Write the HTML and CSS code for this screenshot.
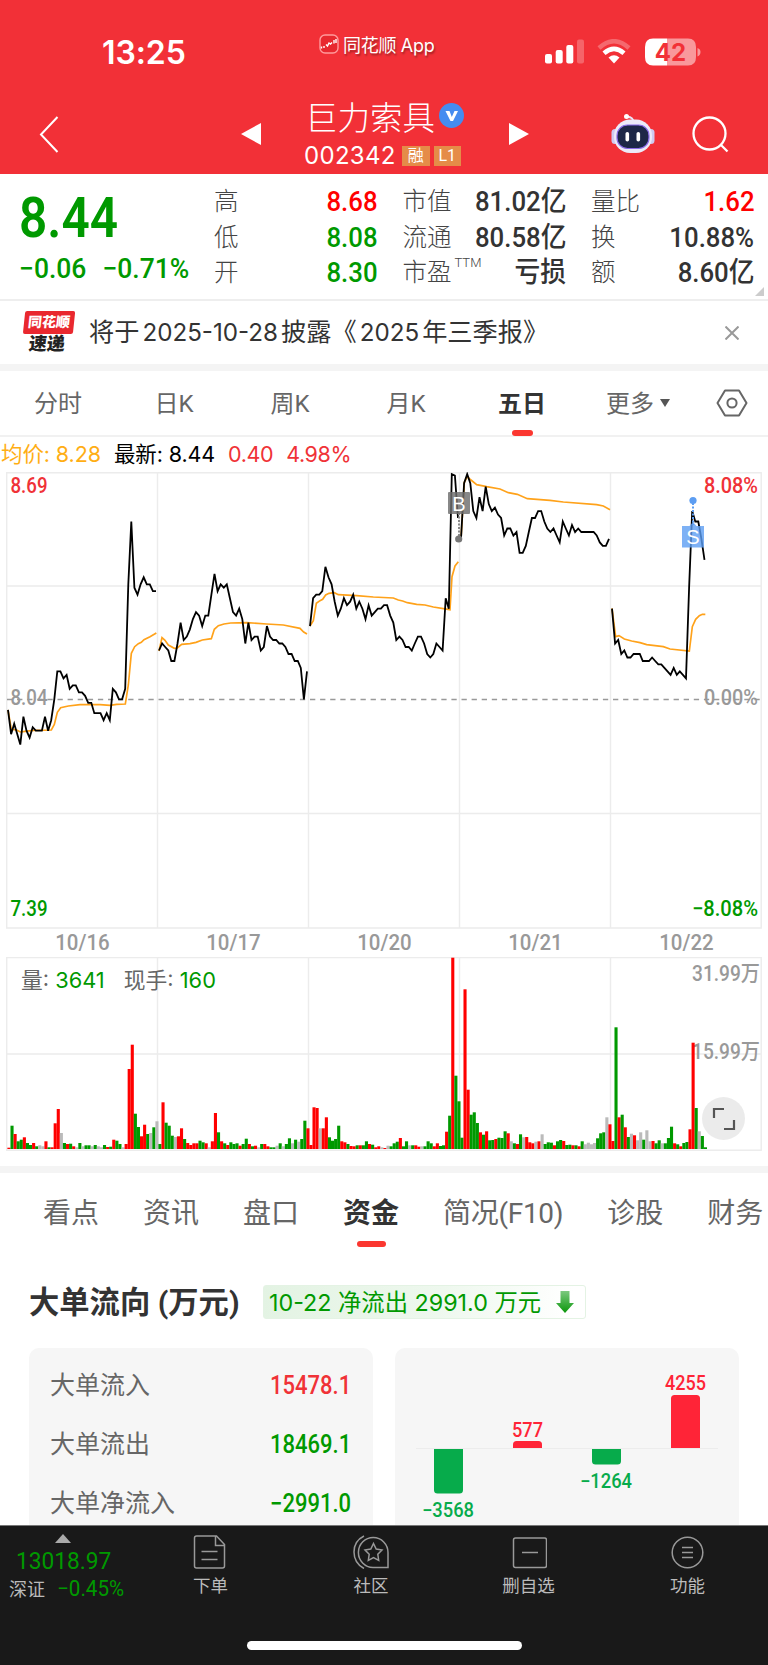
FILE: index.html
```html
<!DOCTYPE html>
<html lang="zh-CN">
  <head>
    <meta charset="UTF-8" />
    <meta name="viewport" content="width=device-width, initial-scale=1.0" />
    <title>巨力索具 002342</title>
    <link rel="stylesheet" href="styles.css">
  </head>
  <body>
    <header>
      <div class="status">
        <div class="time">13:25</div>
        <div class="app-name">
          <svg width="20" height="20" viewBox="0 0 20 20" fill="none">
            <rect x="1" y="1" width="18" height="18" rx="5" fill="#e8282f" stroke="#ff9a9c" stroke-width="1.4" />
            <path d="M2.500 12.500V14.500M5 12v2M7 10.500l1.500 1.500 1.500-3 1.500 1 1.500-1.500M15 6v3.500M17 5v4" stroke="#fff" stroke-width="1.4" />
          </svg>
          <span>同花顺 App</span>
        </div>
        <div class="status-icons">
          <svg width="39" height="25" viewBox="0 0 39 25" fill="#fff">
            <rect x="0" y="15" width="7" height="9.5" rx="2" />
            <rect x="10.7" y="11" width="7" height="13.5" rx="2" />
            <rect x="21.3" y="6" width="7" height="18.5" rx="2" />
            <rect x="32" y="0.5" width="7" height="24" rx="2" opacity="0.25" />
          </svg>
          <svg class="wifi" width="34" height="25" viewBox="0 0 34 25">
            <path d="M2 9Q17-4.500 32 9" fill="none" stroke="#fff" stroke-opacity="0.28" stroke-width="4.500" />
            <path d="M7 14.200Q17 5.500 27 14.200" fill="none" stroke="#fff" stroke-width="4.600" />
            <path d="M17 24.500L11.500 18.500Q17 14 22.500 18.500Z" fill="#fff" />
          </svg>
          <svg class="battery" width="56" height="28" viewBox="0 0 56 28">
            <path d="M8 0.500H22V27.500H8Q0 27.500 0 19V9Q0 0.500 8 0.500Z" fill="#fff" />
            <path d="M22 0.500H43Q51 0.500 51 9V19Q51 27.500 43 27.500H22Z" fill="#fff" opacity="0.5" />
            <path d="M52.500 10Q55.500 11 55.500 14T52.500 18.500Z" fill="#fff" opacity="0.5" />
            <text x="25.500" y="22.500" text-anchor="middle" class="battery-text">42</text>
          </svg>
        </div>
      </div>

      <div class="nav">
        <svg class="back" width="20" height="37" viewBox="0 0 20 37">
          <path d="M18.500 1L2 18.500L18.500 36" fill="none" stroke="#fff" stroke-width="2" />
        </svg>
        <svg class="prev" width="20" height="22" viewBox="0 0 20 22"><path d="M20 0V22L0 11Z" fill="#fff" /></svg>
        <div class="stock">
          <div class="stock-name">
            <span>巨力索具</span>
            <svg width="25" height="25" viewBox="0 0 25 25">
              <circle cx="12.500" cy="12.500" r="12.500" fill="#458cf0" />
              <path d="M6.500 8H10.500L12.800 14L15.500 8H19L14 18H11.500Z" fill="#fff" />
            </svg>
          </div>
          <div class="stock-code">
            <span class="code">002342</span>
            <span class="tag">融</span>
            <span class="tag">L1</span>
          </div>
        </div>
        <svg class="next" width="20" height="22" viewBox="0 0 20 22"><path d="M0 0V22L20 11Z" fill="#fff" /></svg>
        <svg class="robot" width="44" height="40" viewBox="0 0 44 40">
          <path d="M22 8Q23 3.500 16 2.500" fill="none" stroke="#e9e5f7" stroke-width="2" />
          <circle cx="15.500" cy="2.500" r="2.500" fill="#fff" />
          <rect x="0.500" y="15" width="7" height="15" rx="3.500" fill="#cfcaf0" />
          <rect x="36.500" y="15" width="7" height="15" rx="3.500" fill="#cfcaf0" />
          <rect x="3" y="5.500" width="38" height="33.500" rx="16" fill="#eceaf8" />
          <rect x="6" y="11" width="32" height="23.500" rx="10.500" fill="#1d2747" stroke="#8a6be8" stroke-width="1.200" />
          <rect x="14.500" y="18" width="3.600" height="9.500" rx="1.800" fill="#fff" />
          <rect x="25.500" y="18" width="3.600" height="9.500" rx="1.800" fill="#fff" />
        </svg>
        <svg class="search" width="37" height="37" viewBox="0 0 37 37" fill="none" stroke="#fff" stroke-width="2.300">
          <circle cx="17.500" cy="17.500" r="16" />
          <path d="M28.500 28.500L35.500 35.500" />
        </svg>
      </div>
    </header>

    <section class="quote">
      <div class="price down">
        <div class="price-now">8.44</div>
        <div class="price-change"><span>−0.06</span><span>−0.71%</span></div>
      </div>
      <dl class="stats">
        <div><dt>高</dt><dd class="up">8.68</dd></div>
        <div><dt>低</dt><dd class="down">8.08</dd></div>
        <div><dt>开</dt><dd class="down">8.30</dd></div>
      </dl>
      <dl class="stats">
        <div><dt>市值</dt><dd>81.02亿</dd></div>
        <div><dt>流通</dt><dd>80.58亿</dd></div>
        <div><dt>市盈<sup>TTM</sup></dt><dd>亏损</dd></div>
      </dl>
      <dl class="stats">
        <div><dt>量比</dt><dd class="up">1.62</dd></div>
        <div><dt>换</dt><dd>10.88%</dd></div>
        <div><dt>额</dt><dd>8.60亿</dd></div>
      </dl>
      <i class="corner"></i>
    </section>

    <section class="notice">
      <div class="notice-logo">
        <b>同花顺</b>
        <em>速递</em>
      </div>
      <p>将于<span>2025-10-28</span>披露《<span>2025</span>年三季报》</p>
      <svg width="14" height="14" viewBox="0 0 14 14" stroke="#999" stroke-width="2"><path d="M0.500 0.500L13.500 13.500M13.500 0.500L0.500 13.500" /></svg>
    </section>

    <nav class="periods">
      <a>分时</a>
      <a>日K</a>
      <a>周K</a>
      <a>月K</a>
      <a class="active">五日</a>
      <a class="more">更多<i></i></a>
      <svg width="32" height="28" viewBox="0 0 32 28" fill="none" stroke="#666" stroke-width="2">
        <path d="M9 1.500H23L30.500 14L23 26.500H9L1.500 14Z" stroke-linejoin="round" />
        <circle cx="16" cy="14" r="4.600" />
      </svg>
    </nav>

    <section class="charts">
      <div class="legend">
        <span class="avg">均价: 8.28</span>
        <span class="last">最新: 8.44</span>
        <span class="rise">0.40</span>
        <span class="rise">4.98%</span>
      </div>

      <svg class="price-chart" width="768" height="457" viewBox="0 472 768 457">
        <g class="grid">
          <path d="M6.700 472.700H761.200V928H6.700ZM6.700 586H761.200M6.700 813.500H761.200" />
          <path d="M157.500 472.700V928M308.500 472.700V928M459.500 472.700V928M610.500 472.700V928" />
        </g>
        <path class="zero" d="M7 699.500H761" />
        <g class="axis">
          <text class="red" x="10.500" y="493" textLength="37" lengthAdjust="spacingAndGlyphs">8.69</text>
          <text class="grey" x="10.500" y="704.500" textLength="37" lengthAdjust="spacingAndGlyphs">8.04</text>
          <text class="green" x="10.500" y="915.500" textLength="37" lengthAdjust="spacingAndGlyphs">7.39</text>
          <text class="red" x="704" y="493" textLength="54" lengthAdjust="spacingAndGlyphs">8.08%</text>
          <text class="grey" x="704" y="704.500" textLength="54" lengthAdjust="spacingAndGlyphs">0.00%</text>
          <text class="green" x="692" y="915.500" textLength="66" lengthAdjust="spacingAndGlyphs">−8.08%</text>
        </g>
        <!-- average price, one line per day -->
        <g class="avg-line" transform="translate(0 460) scale(0.33333)">
          <polyline points="24,750 34,808 50,810 61,816 75,814 100,811 154,810 163,793 172,757 182,743 205,738 240,734 300,734 330,736 350,733 376,732 385,675 394,580 404,560 415,551 424,547 432,539 450,530 469,519" />
          <polyline points="477,573 486,533 495,541 505,555 523,565 532,564 545,553 570,551 588,547 607,540 634,536 643,508 655,497 672,492 692,489 740,488 800,492 850,495 900,505 911,516 921,522" />
          <polyline points="930,498 940,482 949,430 960,422 968,418 977,405 987,400 1003,398 1015,404 1070,407 1120,411 1180,414 1195,420 1208,423 1222,428 1250,433 1275,435 1300,441 1350,449 1356,350 1365,318 1375,305" />
          <polyline points="1383,237 1393,67 1402,50 1413,60 1430,74 1460,80 1500,87 1525,98 1552,103 1582,116 1650,121 1690,126 1790,134 1810,138 1830,149" />
          <polyline points="1836,445 1847,530 1857,527 1873,537 1895,543 1920,548 1940,554 1990,560 2010,567 2068,573 2077,500 2087,478 2098,467 2107,463 2116,463" />
        </g>
        <g class="price-line" id="price-line"></g>
        <g>
          <path d="M459 513V536" stroke="#888" stroke-width="2" stroke-dasharray="2 1.500" />
          <circle cx="458.700" cy="539" r="3.600" fill="#777" />
          <rect x="448" y="492" width="22" height="22" rx="1" fill="#6e6e6e" opacity="0.82" />
          <text class="mark" x="459" y="510.500">B</text>
          <path d="M693 503V525" stroke="#5c9df2" stroke-width="2" stroke-dasharray="2 1.500" />
          <circle cx="693" cy="500.500" r="3.600" fill="#5c9df2" />
          <path d="M682 526H689.500L693 522L696.500 526H704V547.500H682Z" fill="#5c9df2" opacity="0.8" />
          <text class="mark" x="693" y="544">S</text>
        </g>
      </svg>

      <div class="dates">
        <span>10/16</span>
        <span>10/17</span>
        <span>10/20</span>
        <span>10/21</span>
        <span>10/22</span>
      </div>

      <div class="volume">
        <svg width="768" height="209" viewBox="0 957 768 209">
          <g class="grid">
            <path d="M6.700 957.500H761.200V1150.300H6.700ZM6.700 1054H761.200" />
            <path d="M157.500 957.500V1150M308.500 957.500V1150M459.500 957.500V1150M610.500 957.500V1150" />
          </g>
          <g class="axis-volume">
            <text x="692" y="981" textLength="68" lengthAdjust="spacingAndGlyphs">31.99万</text>
            <text x="692" y="1058.500" textLength="68" lengthAdjust="spacingAndGlyphs">15.99万</text>
          </g>
          <g id="volume-bars"></g>
        </svg>
        <div class="volume-legend">量: <b>3641</b><span>现手: <b>160</b></span></div>
        <div class="expand">
          <svg width="24" height="24" viewBox="0 0 24 24" fill="none" stroke="#555" stroke-width="2.200">
            <path d="M2 11V2H12M22 13V22H12" />
          </svg>
        </div>
      </div>
    </section>

    <nav class="topics">
      <a>看点</a>
      <a>资讯</a>
      <a>盘口</a>
      <a class="active">资金</a>
      <a>简况(F10)</a>
      <a>诊股</a>
      <a>财务</a>
    </nav>

    <section class="flow">
      <div class="flow-title">
        <h2>大单流向 (万元)</h2>
        <div class="flow-badge">
          <span>10-22 净流出 2991.0 万元</span>
          <svg width="18" height="22" viewBox="0 0 18 22">
            <defs>
              <linearGradient id="arrow" x1="0" y1="0" x2="0" y2="1">
                <stop offset="0" stop-color="#7cc97f" />
                <stop offset="1" stop-color="#0a960a" />
              </linearGradient>
            </defs>
            <path d="M4.500 0H13.500V12H18L9 22L0 12H4.500Z" fill="url(#arrow)" />
          </svg>
        </div>
      </div>
      <div class="cards">
        <div class="card flow-list">
          <div><span>大单流入</span><b class="rise">15478.1</b></div>
          <div><span>大单流出</span><b class="down">18469.1</b></div>
          <div><span>大单净流入</span><b class="down">−2991.0</b></div>
        </div>
        <div class="card">
          <svg width="344" height="177" viewBox="395 1348 344 177">
            <path d="M416 1448.500H718" stroke="#ececec" />
            <g fill="#07ab4b">
              <path d="M434 1449H463V1490Q463 1493.500 459.500 1493.500H437.500Q434 1493.500 434 1490Z" />
              <path d="M592 1449H621V1461Q621 1464.500 617.500 1464.500H595.500Q592 1464.500 592 1461Z" />
              <text x="422" y="1517" textLength="52" lengthAdjust="spacingAndGlyphs">−3568</text>
              <text x="580" y="1488" textLength="52" lengthAdjust="spacingAndGlyphs">−1264</text>
            </g>
            <g fill="#ff2437">
              <path d="M513 1448V1444.500Q513 1441 516.500 1441H538.500Q542 1441 542 1444.500V1448Z" />
              <path d="M671 1448V1398.500Q671 1395 674.500 1395H696.500Q700 1395 700 1398.500V1448Z" />
              <text x="512" y="1436.500" textLength="31" lengthAdjust="spacingAndGlyphs">577</text>
              <text x="665" y="1390" textLength="41" lengthAdjust="spacingAndGlyphs">4255</text>
            </g>
          </svg>
        </div>
      </div>
    </section>

    <footer>
      <div class="toolbar">
        <div class="index">
          <i></i>
          <div class="index-value">13018.97</div>
          <div class="index-change">深证<span>−0.45%</span></div>
        </div>
        <div class="tool">
          <svg width="36" height="34" viewBox="1.500 0 36 34">
            <path d="M5 1H25L33 9.500V31Q33 33 31 33H5Q3 33 3 31V3Q3 1 5 1ZM24 1V10.500H33M10 16.500H26M10 24.500H26" />
          </svg>
          <span>下单</span>
        </div>
        <div class="tool community">
          <svg width="36" height="34" viewBox="0 0 36 34">
            <path d="M35 32.500H20A14.800 15 0 1 1 35 17.500ZM11 1Q1 6 1 17T11 33.500" />
            <path d="M20.500 8.500L23.200 14L29 15L24.800 19.300L25.700 25.500L20.500 22.700L15.300 25.500L16.200 19.300L12 15L17.800 14Z" />
          </svg>
          <span>社区</span>
        </div>
        <div class="tool">
          <svg width="36" height="34" viewBox="-1.500 0 36 34">
            <rect x="1" y="3" width="33" height="29.500" rx="2" />
            <path d="M9.500 17.500H25.500" />
          </svg>
          <span>删自选</span>
        </div>
        <div class="tool">
          <svg width="36" height="34" viewBox="0.500 0 36 34">
            <circle cx="18" cy="17.500" r="15.300" />
            <path d="M12.500 12.500H23.500M12.500 17.500H23.500M12.500 22.500H23.500" />
          </svg>
          <span>功能</span>
        </div>
      </div>
      <div class="home-bar"></div>
    </footer>

    <script>
      const dayStart = [8, 159, 310, 461, 612];
      const step = 148 / 48;

      // distance from 8.04, in cents
      const prices = [
        [-3, -10, -7, -10, -13, -5, -9, -11, -8, -9, -9, -9, -5, -9, -6, 0, 8, 8, 6, 7, 3, 4, 4, 2, 2, 1, -1, -1, -4, -4, -4, -6, -4, -6, 3, 2, 0, 0, 3, 33, 51, 32, 30, 33, 35, 33, 33, 31, 31],
        [14, 16, 15, 14, 11, 11, 16, 22, 17, 18, 20, 23, 25, 24, 21, 24, 24, 30, 36, 31, 33, 32, 33, 29, 25, 24, 26, 23, 16, 22, 17, 18, 18, 14, 15, 21, 18, 17, 17, 16, 16, 15, 13, 13, 11, 11, 9, 0, 8],
        [21, 29, 30, 30, 31, 38, 35, 33, 28, 24, 26, 29, 27, 28, 30, 26, 28, 26, 23, 27, 24, 25, 26, 26, 27, 27, 24, 22, 17, 18, 17, 15, 15, 14, 16, 18, 18, 16, 13, 12, 13, 16, 15, 14, 29, 26, 64.6, 64.2, 52],
        [46, 62, 64.6, 62, 54, 52, 58, 54, 61, 56, 54, 55, 53, 52, 47, 49, 49, 47, 48, 42, 42, 44, 48, 52, 52, 54, 54, 51, 49, 48, 49, 47, 45, 51, 49, 47, 50, 48, 49, 48, 48, 48, 48, 48, 47, 45, 44, 44, 46],
        [26, 16, 17, 13, 14, 12, 12, 13, 13, 13, 11, 11, 11, 12, 11, 10, 10, 9, 8, 7, 9, 7, 8, 7, 6, 32, 54, 51, 51, 46, 40],
      ];

      // r = up, g = down, n = unchanged
      const volumes = [
        "r4 g70 r45 g23 g28 r35 g18 g12 r18 g8 n11 n8 r23 g5 r5 r77 r120 n48 g18 r15 g16 r8 n5 g18 n8 g11 g11 n8 g12 n8 n5 g12 r6 g7 r28 g25 g15 n5 r15 r240 r313 g106 g66 r38 r73 g45 n48 g65 n83",
        "g15 r140 g79 g70 g40 n36 r38 r62 g30 r18 r12 r17 r17 g25 g20 r17 n5 r23 r108 g50 r23 g17 r12 g20 g15 g17 r10 g15 g31 r15 g8 r10 n5 g15 r15 r8 g5 g5 n10 g17 n8 g15 g32 n17 g28 n22 g30 g85 r62",
        "r12 r125 r123 n62 r62 r95 g35 g25 g30 g70 r23 r20 g15 r9 r8 g11 r11 g11 g23 r15 g13 r5 r8 n5 r3 n10 g8 g17 g22 r33 g8 g23 n11 g11 r11 r7 n8 g8 g23 g17 r8 r17 g9 g11 r52 g100 r574 g220 g143",
        "g34 r479 r178 g103 g110 g78 r50 g43 r53 g26 g27 r30 g34 g33 g53 r47 n23 g17 r15 g44 n35 r36 r20 r17 n22 r23 n44 g15 g20 g19 r11 g23 g27 r24 g12 g13 r11 g11 r8 g23 n14 n19 n14 n18 g32 g47 g50 n95 r74",
        "r24 g365 r95 g103 r65 g36 n46 r41 n26 n50 g28 n56 n23 r24 g17 g26 n17 g17 g33 g67 r17 g14 r8 g18 g21 r59 r319 g123 n53 g39 g5",
      ];

      const colors = { r: "#ff0000", g: "#009900", n: "#bbbbbb" };

      document.getElementById("price-line").innerHTML = prices
        .map((day, d) => {
          const points = day.map((p, i) => `${(dayStart[d] + i * step).toFixed(1)},${(699.3 - p * 3.486).toFixed(1)}`);
          return `<polyline points="${points.join(" ")}" />`;
        })
        .join("");

      document.getElementById("volume-bars").innerHTML = volumes
        .map((day, d) =>
          day
            .split(" ")
            .map((bar, i) => {
              const h = bar.slice(1) / 3;
              const x = dayStart[d] - 0.6 + i * step;
              return `<rect x="${x.toFixed(2)}" y="${(1149 - h).toFixed(1)}" width="3.1" height="${h.toFixed(1)}" fill="${colors[bar[0]]}" />`;
            })
            .join("")
        )
        .join("");
    </script>
  </body>
</html>
```

FILE: styles.css
```css
* {
  box-sizing: border-box;
}

body {
  margin: 0;
  width: 768px;
  height: 1665px;
  overflow: hidden;
  display: flex;
  flex-direction: column;
  font-family: Roboto, "Noto Sans CJK SC", sans-serif;
  color: #333;
  background-color: #fff;
}

body > * {
  flex-shrink: 0;
}

svg {
  display: block;
  flex-shrink: 0;
}

.up {
  color: #ff0000;
}

.down {
  color: #009900;
}

.rise {
  color: #f03237;
}

/* header */

header {
  height: 174px;
  background-color: #f23037;
  color: #fff;
}

.status {
  height: 90px;
  display: grid;
  grid-template-columns: 319px 226px 1fr;
}

.time {
  padding: 33px 0 0 102px;
  font-family: Inter, sans-serif;
  font-size: 32px;
  line-height: 39px;
  font-weight: 600;
  letter-spacing: -0.1px;
}

.app-name {
  display: flex;
  gap: 4px;
  padding-top: 34px;
  font-size: 18px;
  line-height: 23px;
  font-family: Inter, "Noto Sans CJK SC", sans-serif;
  letter-spacing: -0.3px;
  text-shadow: 1px 2px 2px rgba(0, 0, 0, 0.35);
  white-space: nowrap;
}

.status-icons {
  display: flex;
  padding-top: 39px;
}

.wifi {
  margin-left: 13px;
}

.battery {
  margin: -1px 0 0 14px;
}

.battery-text {
  font-family: Inter, sans-serif;
  font-size: 24px;
  font-weight: 700;
  fill: #f23037;
}

.nav {
  height: 84px;
  display: flex;
  align-items: flex-start;
}

.back {
  margin: 26px 0 0 39px;
}

.prev {
  margin: 33px 0 0 182px;
}

.stock {
  margin-left: 44px;
  width: 160px;
}

.stock-name {
  display: flex;
  align-items: center;
  height: 50px;
  font-size: 32.5px;
  white-space: nowrap;
}

.stock-name span {
  width: 134px;
  font-weight: 300;
}

.stock-code {
  display: flex;
  align-items: center;
  height: 27px;
  margin-top: 2px;
}

.code {
  font-family: Inter, sans-serif;
  font-size: 24px;
  width: 100px;
  margin-left: -1px;
  letter-spacing: 0.3px;
}

.tag {
  width: 28px;
  height: 20px;
  margin-right: 4px;
  background-color: #e58c48;
  font-size: 16px;
  line-height: 19px;
  text-align: center;
}

.next {
  margin: 33px 0 0 44px;
}

.robot {
  margin: 24px 0 0 82px;
}

.search {
  margin: 26px 0 0 37px;
}

/* quote */

.quote {
  position: relative;
  display: flex;
  height: 127px;
  border-bottom: 2px solid #eee;
  padding: 10px 0 0 19px;
}

.quote > * {
  flex-shrink: 0;
}

.price {
  width: 195px;
}

.price-now {
  height: 62px;
  margin-top: 1px;
  font-size: 56px;
  line-height: 66px;
  font-weight: 600;
  transform: scaleX(0.885);
  transform-origin: left;
}

.price-change {
  display: flex;
  gap: 17px;
  margin-top: 4px;
  font-size: 28px;
  line-height: 36px;
  font-weight: 500;
  white-space: nowrap;
  transform: scaleX(0.945);
  transform-origin: left;
}

.stats {
  width: 163.5px;
  margin: 0 25px 0 0;
}

.stats div {
  display: flex;
  justify-content: space-between;
  height: 35.5px;
  line-height: 35px;
  white-space: nowrap;
}

.stats dt {
  font-size: 24.5px;
  font-weight: 300;
  color: #444;
}

.stats dd {
  margin: 0;
  font-size: 28px;
  font-weight: 500;
  transform: scaleX(0.92);
  transform-origin: right;
}

.stats sup {
  font-size: 13px;
  line-height: 0;
  vertical-align: 14px;
  margin-left: 3px;
}

.corner {
  position: absolute;
  right: 4px;
  bottom: 3px;
  border-left: 9px solid transparent;
  border-bottom: 9px solid #ccc;
}

/* notice */

.notice {
  display: flex;
  align-items: center;
  height: 63px;
  padding: 0 29px 0 23px;
}

.notice-logo {
  width: 50px;
  margin-right: 16px;
  text-align: center;
  transform: skewX(-6deg);
}

.notice-logo b {
  display: block;
  height: 23px;
  border-radius: 2px;
  background-color: #e9282f;
  color: #fff;
  font-size: 14px;
  line-height: 22px;
  font-weight: 900;
}

.notice-logo em {
  display: block;
  height: 20px;
  font-size: 18px;
  line-height: 19px;
  font-style: normal;
  font-weight: 900;
  color: #222;
}

.notice p {
  flex: 1;
  margin: 0;
  font-size: 25.2px;
  line-height: 36px;
}

.notice p span {
  font-family: Inter, sans-serif;
  font-size: 24.2px;
  margin: 0 3px;
}

/* period tabs */

.periods {
  display: flex;
  align-items: center;
  height: 73px;
  border-top: 7px solid #f4f4f4;
  border-bottom: 2px solid #f1f1f1;
  font-size: 24px;
  color: #666;
}

.periods a {
  width: 116px;
  height: 64px;
  line-height: 66px;
  text-align: center;
}

.periods a.active {
  position: relative;
  font-weight: 700;
  color: #333;
}

.periods a.active::after {
  content: "";
  position: absolute;
  left: 48px;
  bottom: -1px;
  width: 21px;
  height: 6px;
  border-radius: 3px;
  background-color: #fb3730;
}

.more i {
  display: inline-block;
  margin-left: 6px;
  vertical-align: 5px;
  border: 5.5px solid transparent;
  border-top: 8px solid #555;
  border-bottom: 0;
}

.periods svg {
  margin-left: 20px;
}

/* charts */

.legend {
  display: flex;
  gap: 13px;
  height: 35px;
  line-height: 34px;
  font-family: Inter, "Noto Sans CJK SC", sans-serif;
  font-size: 21.5px;
  letter-spacing: -0.1px;
  white-space: nowrap;
  padding-left: 1px;
}

.legend .avg {
  color: #ffae14;
}

.legend .last {
  color: #000;
}

.legend .rise {
  letter-spacing: -0.4px;
}

.grid path {
  fill: none;
  stroke: #ececec;
  stroke-width: 1.4;
}

.zero {
  stroke: #999;
  stroke-width: 1.4;
  stroke-dasharray: 5.3 4.8;
}

.axis text,
.axis-volume text {
  font-size: 21.5px;
  font-weight: 500;
}

.axis .red {
  fill: #f03237;
}

.axis .green {
  fill: #009900;
}

.axis .grey,
.axis-volume text {
  fill: #999;
}

.avg-line polyline {
  fill: none;
  stroke: #ffa21a;
  stroke-width: 5;
}

.price-line polyline {
  fill: none;
  stroke: #000;
  stroke-width: 1.8;
}

.mark {
  font-family: "Liberation Sans", sans-serif;
  font-size: 20px;
  text-anchor: middle;
  fill: #fff;
}

.dates {
  display: flex;
  height: 28px;
  padding-left: 7px;
  line-height: 27px;
  font-size: 22px;
  font-weight: 500;
  color: #999;
}

.dates span {
  width: 151px;
  text-align: center;
  transform: scaleX(0.93);
}

.volume {
  position: relative;
}

.volume-legend {
  position: absolute;
  left: 21px;
  top: 8px;
  font-family: Inter, "Noto Sans CJK SC", sans-serif;
  font-size: 21.8px;
  line-height: 30px;
  color: #666;
}

.volume-legend b {
  font-weight: 400;
  color: #009900;
}

.volume-legend span {
  margin-left: 19px;
}

.expand {
  position: absolute;
  left: 702px;
  top: 140px;
  width: 43px;
  height: 43px;
  border-radius: 50%;
  background-color: rgba(233, 233, 233, 0.92);
  display: flex;
  align-items: center;
  justify-content: center;
}

/* topic tabs */

.topics {
  display: flex;
  gap: 44px;
  height: 82px;
  border-top: 7px solid #f4f4f4;
  padding-left: 43px;
  font-size: 28px;
  line-height: 82px;
  color: #666;
  white-space: nowrap;
}

.topics a:nth-child(5) {
  letter-spacing: -0.3px;
}

.topics a.active {
  position: relative;
  font-weight: 700;
  color: #333;
}

.topics a.active::after {
  content: "";
  position: absolute;
  left: 14px;
  bottom: 1px;
  width: 29px;
  height: 6px;
  border-radius: 3px;
  background-color: #fb3730;
}

/* money flow */

.flow {
  height: 277px;
  padding: 37px 29px 0;
}

.flow-title {
  display: flex;
  align-items: center;
  height: 34px;
}

.flow h2 {
  width: 234px;
  margin: 0;
  padding-bottom: 4px;
  font-size: 30.3px;
  font-weight: 700;
  white-space: nowrap;
}

.flow-badge {
  display: flex;
  align-items: center;
  width: 323px;
  height: 34px;
  padding-left: 5px;
  border: 1px solid #e4f3e4;
  border-radius: 3px;
  background: linear-gradient(100deg, #e3f3e3 0%, #eef8ee 55%, #fff 95%);
  color: #009900;
  font-family: Inter, "Noto Sans CJK SC", sans-serif;
  font-size: 23.3px;
  white-space: nowrap;
}

.flow-badge span {
  width: 287px;
  padding-bottom: 3px;
}

.cards {
  display: flex;
  gap: 22px;
  margin-top: 29px;
}

.card {
  width: 344px;
  height: 177px;
  border-radius: 10px 10px 0 0;
  background-color: #f6f6f6;
}

.card text {
  font-size: 19.5px;
  font-weight: 500;
}

.flow-list {
  padding: 9px 22px 0 21px;
}

.flow-list div {
  display: flex;
  justify-content: space-between;
  height: 59px;
  line-height: 57px;
  font-size: 25px;
  color: #666;
}

.flow-list b {
  font-weight: 500;
  transform: scaleX(0.88);
  transform-origin: right;
}

.flow-list .rise {
  color: #f03237;
}

.flow-list .down {
  color: #009900;
}

/* bottom bar */

footer {
  height: 140px;
  border-top: 1px solid #777;
  background-color: #191919;
  color: #bbb;
}

.toolbar {
  display: flex;
  height: 116px;
}

.index {
  width: 131px;
  white-space: nowrap;
}

.index i {
  display: block;
  width: 16px;
  margin: 8px 0 0 55px;
  border: 8px solid transparent;
  border-bottom: 9px solid #aaa;
  border-top: 0;
}

.index-value {
  margin: 4px 0 0 16px;
  font-size: 24px;
  line-height: 28px;
  color: #009900;
  transform: scaleX(0.945);
  transform-origin: left;
}

.index-change {
  padding-left: 9px;
  font-size: 18px;
  line-height: 28px;
}

.index-change span {
  display: inline-block;
  margin-left: 12px;
  font-size: 21.5px;
  color: #009900;
  transform: scaleX(0.96);
  transform-origin: left;
}

.tool {
  width: 159px;
  display: flex;
  flex-direction: column;
  align-items: center;
  padding-top: 9px;
  font-size: 17.5px;
  line-height: 30px;
}

.community {
  padding-left: 3px;
}

.tool svg {
  margin-bottom: 2px;
  fill: none;
  stroke: #999;
  stroke-width: 1.5;
}

.home-bar {
  width: 275px;
  height: 9px;
  margin: -1px auto 0;
  border-radius: 5px;
  background-color: #fff;
}
```
